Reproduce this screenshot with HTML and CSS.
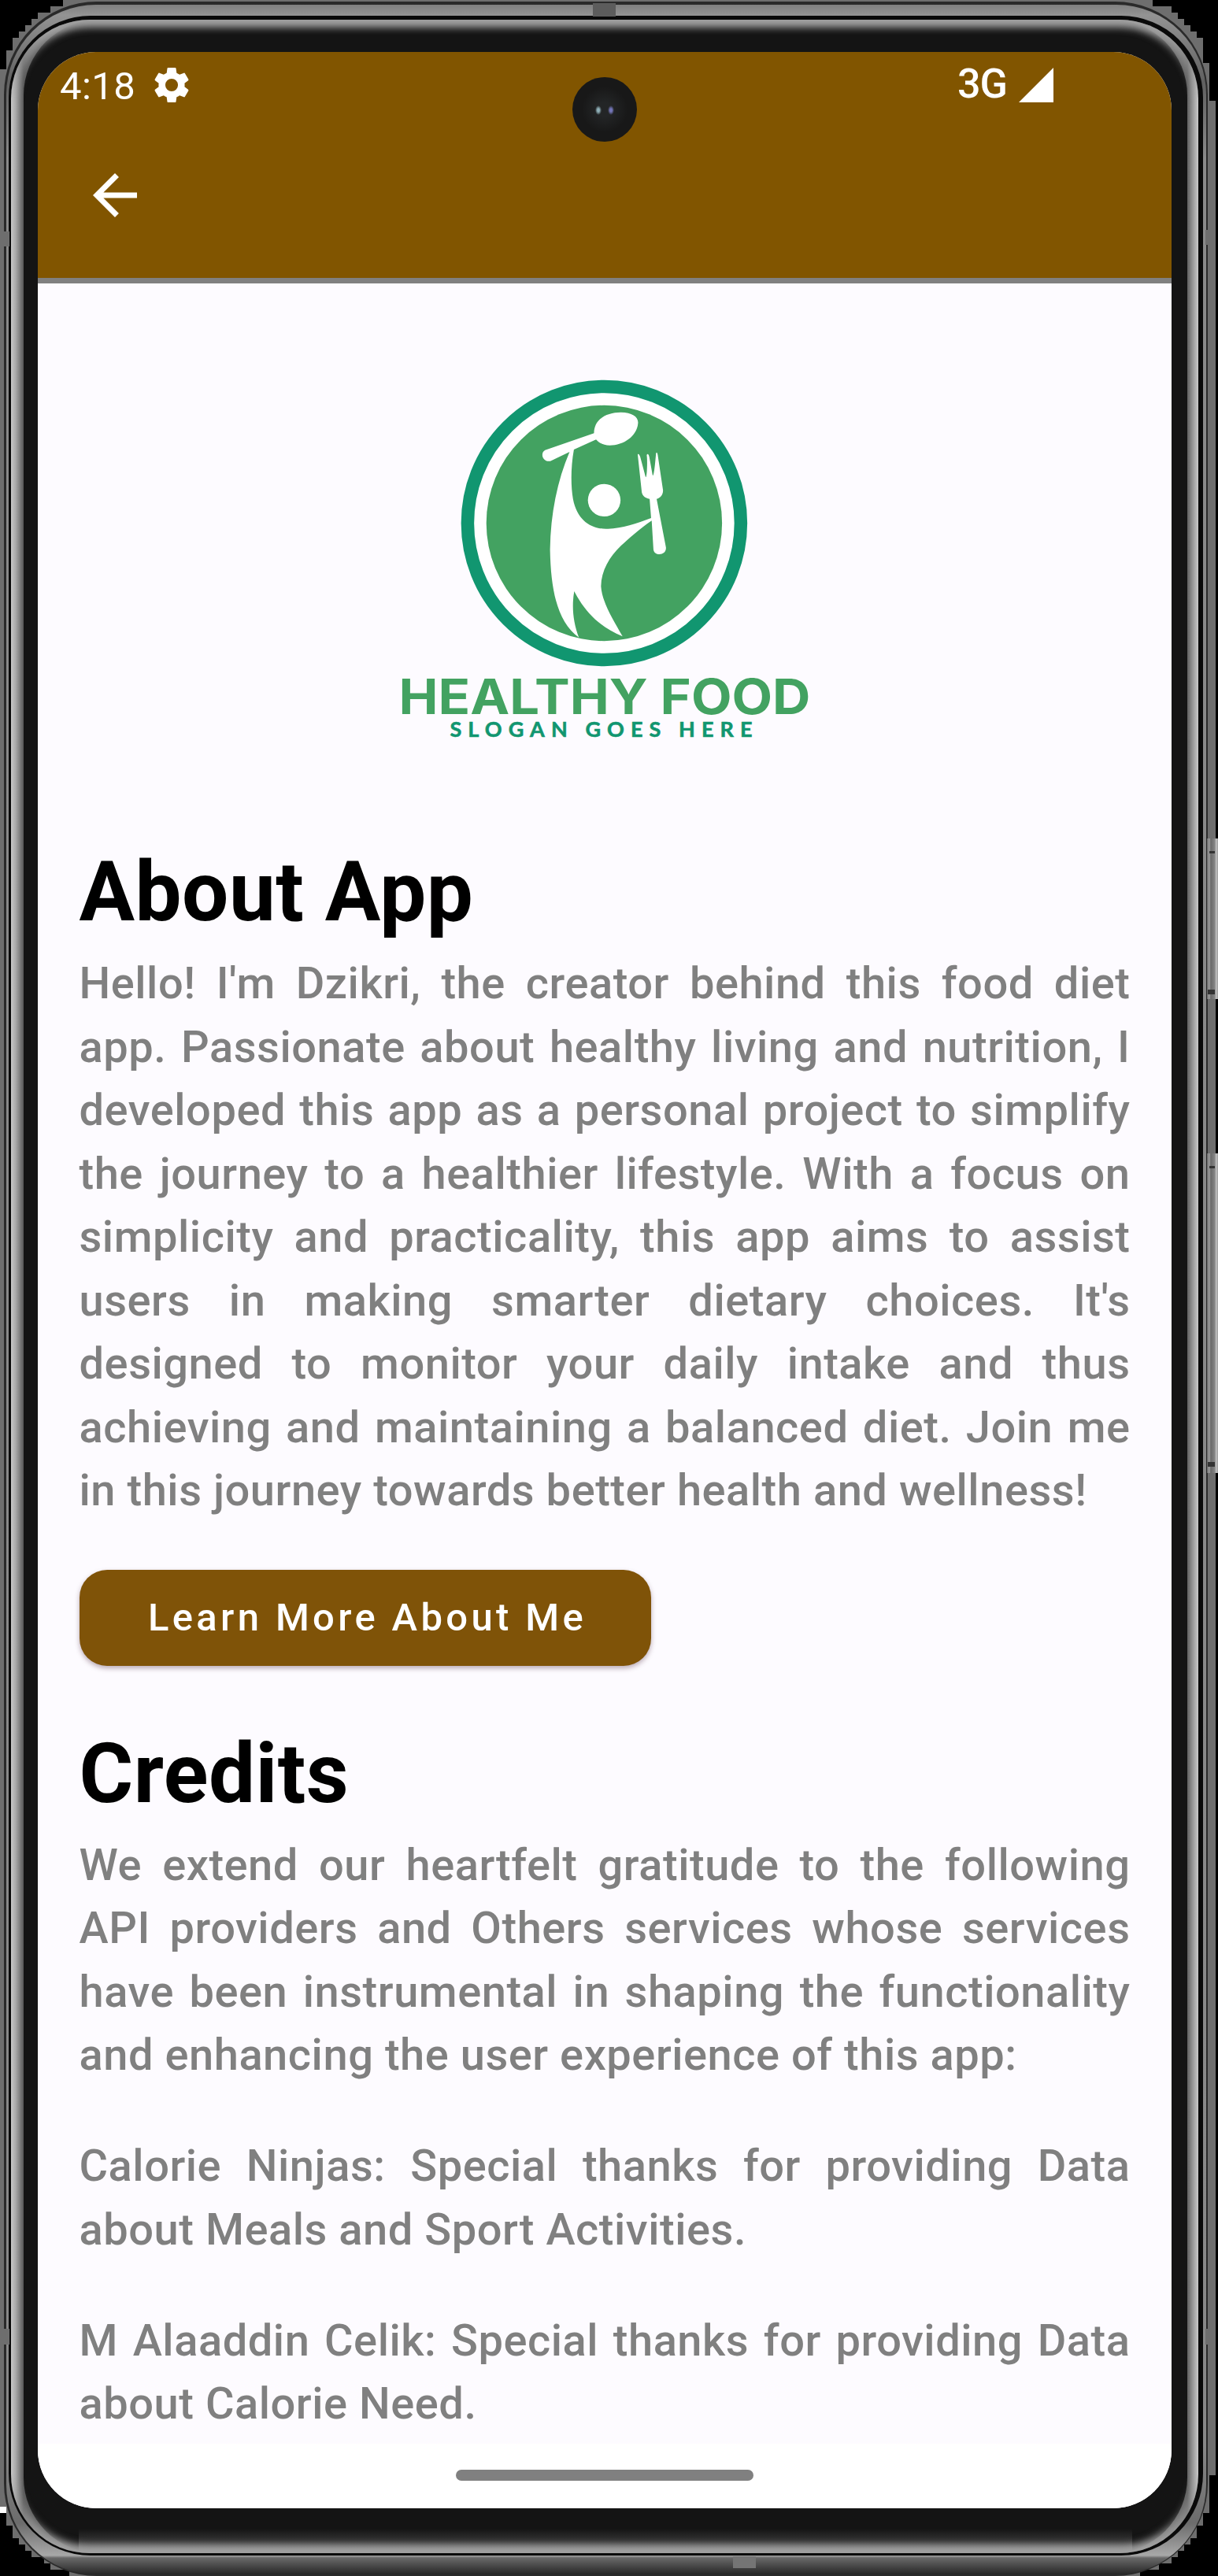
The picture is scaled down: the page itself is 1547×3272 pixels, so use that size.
FILE: index.html
```html
<!DOCTYPE html>
<html lang="en">
<head>
<meta charset="utf-8">
<title>About App</title>
<link rel="stylesheet" href="styles.css">
</head>
<body>
<div class="device">
  <svg class="shell" viewBox="0 0 1547 3272" aria-hidden="true">
    <defs>
      <linearGradient id="sides" gradientUnits="userSpaceOnUse" x1="14" y1="0" x2="1522" y2="0">
        <stop offset="0" stop-color="#c8c8c8"/><stop offset=".004" stop-color="#a8a8a8"/><stop offset=".0106" stop-color="#585858"/>
        <stop offset=".9907" stop-color="#606060"/><stop offset=".995" stop-color="#949494"/><stop offset="1" stop-color="#cacaca"/>
      </linearGradient>
      <linearGradient id="rim" gradientUnits="userSpaceOnUse" x1="0" y1="6" x2="0" y2="3270">
        <stop offset="0" stop-color="#808080"/><stop offset=".004" stop-color="#939393"/><stop offset=".03" stop-color="#606060"/><stop offset=".06" stop-color="#8a8a8a"/>
        <stop offset=".95" stop-color="#888"/><stop offset=".98" stop-color="#6c6c6c"/><stop offset=".9926" stop-color="#a8a8a8"/><stop offset=".9936" stop-color="#686868"/><stop offset="1" stop-color="#262626"/>
      </linearGradient>
      <linearGradient id="key" gradientUnits="userSpaceOnUse" x1="1533" y1="0" x2="1547" y2="0"><stop offset="0" stop-color="#666"/><stop offset=".2" stop-color="#a0a0a0"/><stop offset=".35" stop-color="#696969"/><stop offset=".7" stop-color="#858585"/><stop offset=".85" stop-color="#c4c4c4"/><stop offset="1" stop-color="#999"/></linearGradient>
      <linearGradient id="fade" gradientUnits="userSpaceOnUse" x1="0" y1="0" x2="0" y2="3272">
        <stop offset=".012" stop-color="#fff"/><stop offset=".04" stop-color="#000"/><stop offset=".96" stop-color="#000"/><stop offset=".988" stop-color="#fff"/>
      </linearGradient>
      <linearGradient id="glow-bottom" x1="0" y1="0" x2="0" y2="1"><stop offset="0" stop-color="#141414"/><stop offset=".5" stop-color="#343434"/><stop offset="1" stop-color="#707070"/></linearGradient>
      <mask id="ends" maskUnits="userSpaceOnUse" x="0" y="0" width="1547" height="3272"><rect width="1547" height="3272" fill="url(#fade)"/></mask>
      <filter id="soft" filterUnits="userSpaceOnUse" x="0" y="0" width="1547" height="3272"><feGaussianBlur stdDeviation="5"/></filter>
      <clipPath id="inner"><rect x="14" y="25" width="1508" height="3218" rx="100"/></clipPath>
      <clipPath id="glass"><rect x="30" y="25" width="1478" height="3218" rx="96"/></clipPath>
    </defs>
    <path fill="#6e6e6e" d="M80 0H1464V8H1488V16H1496V24H1504V32H1512V40H1520V48H1528V80H1536V128H1544V3144H1536V3192H1528V3208H1520V3224H1512V3232H1504V3240H1496V3248H1488V3256H1472V3264H1448V3272H88V3264H64V3256H56V3248H40V3240H32V3232H24V3224H16V3208H8V3192H0V88H8V64H16V48H24V40H32V32H40V24H48V16H64V8H80Z"/>
    <path fill="#fff" d="M0 3184h8v8H0Z"/>
    <rect x="5" y="2" width="1529" height="3270" rx="118" fill="#2a2a2a"/>
    <rect x="8" y="6" width="1524" height="3264" rx="114" fill="url(#rim)"/>
    <rect x="11" y="20" width="1517" height="3226" rx="104" fill="#0a0a0a"/>
    <g clip-path="url(#inner)">
      <rect x="14" y="25" width="1508" height="3218" fill="url(#sides)"/>
      <g clip-path="url(#glass)">
        <rect x="30" y="25" width="1478" height="3218" fill="#141414"/>
        <rect x="100" y="3212" width="1338" height="31" fill="url(#glow-bottom)"/>
      </g>
      <g mask="url(#ends)"><rect x="14" y="25" width="1508" height="3218" rx="100" fill="none" stroke="#a0a0a0" stroke-width="20" filter="url(#soft)"/></g>
    </g>
    <rect x="753" y="4" width="29" height="17" fill="#5c5c5c"/>
    <rect x="931" y="3247" width="29" height="15" fill="#757575"/>
    <g fill="#6e6e6e"><rect x="0" y="294" width="12" height="19"/><rect x="1531" y="292" width="13" height="19"/><rect x="0" y="2958" width="12" height="20"/><rect x="1531" y="2958" width="13" height="20"/></g>
    <g fill="url(#key)"><rect x="1533" y="1065" width="14" height="204"/><rect x="1533" y="1465" width="14" height="406"/></g>
    <g fill="#333"><rect x="1536" y="1081" width="7" height="3"/><rect x="1534" y="1257" width="9" height="6"/><rect x="1536" y="1481" width="7" height="3"/><rect x="1534" y="1857" width="9" height="6"/></g>
  </svg>

  <main class="screen">
    <header class="app-header">
      <div class="status-bar">
        <span class="clock">4:18</span>
        <svg class="gear" viewBox="2 2 20 20"><path fill="#fff" d="M19.140 12.940c.04-.3.060-.61.060-.94 0-.32-.02-.64-.07-.94l2.030-1.580c.18-.14.230-.41.120-.61l-1.920-3.320c-.12-.22-.37-.29-.59-.22l-2.390.96c-.5-.38-1.030-.7-1.620-.94L14.400 2.810c-.04-.24-.24-.41-.48-.41h-3.840c-.24 0-.43.170-.47.410L9.250 5.350C8.660 5.590 8.120 5.920 7.630 6.290L5.240 5.330c-.22-.08-.47 0-.59.220L2.740 8.870c-.12.210-.08.470.12.610l2.030 1.580c-.05.300-.09.630-.09.940s.02.640.07.940l-2.030 1.580c-.18.140-.23.410-.12.610l1.920 3.320c.12.220.37.290.59.220l2.390-.96c.5.380 1.030.7 1.620.94l.36 2.540c.05.240.24.410.48.410h3.840c.24 0 .44-.17.470-.41l.36-2.540c.59-.24 1.130-.56 1.620-.94l2.390.96c.22.080.47 0 .59-.22l1.920-3.320c.12-.22.070-.47-.12-.61zM12 15.500A3.500 3.500 0 1 1 12 8.500a3.500 3.500 0 0 1 0 7z"/></svg>
        <span class="network">3G</span>
        <svg class="signal" viewBox="0 0 44 44"><path fill="#fff" d="M44 0V44H0Z"/></svg>
      </div>
      <svg class="back" viewBox="4 4 16 16"><path fill="#fff" d="M20 11H7.830l5.590-5.590L12 4l-8 8 8 8 1.410-1.410L7.830 13H20z"/></svg>
      <span class="camera"></span>
    </header>

    <div class="content">
      <svg class="logo" viewBox="480 450 580 520" role="img" aria-label="Healthy Food">
        <circle cx="767.400" cy="664.500" r="173.500" fill="#fff" stroke="#119670" stroke-width="16.500"/>
        <circle cx="767.400" cy="664.500" r="149.700" fill="#43a261"/>
        <g fill="#fff" transform="translate(480 450) scale(.3699 .3333)">
          <path d="M742 301C742 245 788 221 834 221C874 221 896 240 893 264C889 312 844 347 796 347C776 347 760 339 749 325L673 363C662 430 662 500 670 552C685 636 735 668 790 665C838 664 889 644 938 624L933 551C917 549 908 538 906 526L892 382C895 377 899 386 901 392L919 467C924 478 926 400 923 384C926 376 930 382 932 392L943 460C948 474 953 400 955 377C958 369 961 380 962 392L979 518C979 536 970 547 957 551L989 736C992 768 948 771 946 743L940 634C898 665 860 705 835 729C795 772 767 824 766 884C770 946 807 1010 840 1075C764 1040 713 986 674 903C665 960 670 1023 690 1079C617 1020 594 905 591 745C593 605 616 482 658 372L592 407C565 412 556 376 574 365Z"/>
          <ellipse cx="777" cy="556" rx="56" ry="62"/>
        </g>
        <text class="logo-name" x="506.500" y="907" textLength="523" lengthAdjust="spacingAndGlyphs">HEALTHY FOOD</text>
        <text class="logo-slogan" x="571.500" y="935.500" textLength="384" lengthAdjust="spacing">SLOGAN GOES HERE</text>
      </svg>

      <h1>About App</h1>
      <p>Hello! I'm Dzikri, the creator behind this food diet app. Passionate about healthy living and nutrition, I developed this app as a personal project to simplify the journey to a healthier lifestyle. With a focus on simplicity and practicality, this app aims to assist users in making smarter dietary choices. It's designed to monitor your daily intake and thus achieving and maintaining a balanced diet. Join me in this journey towards better health and wellness!</p>
      <button class="more" type="button">Learn More About Me</button>
      <h1>Credits</h1>
      <p>We extend our heartfelt gratitude to the following API providers and Others services whose services have been instrumental in shaping the functionality and enhancing the user experience of this app:</p>
      <p class="credit">Calorie Ninjas: Special thanks for providing Data about Meals and Sport Activities.</p>
      <p class="credit">M Alaaddin Celik: Special thanks for providing Data about Calorie Need.</p>
    </div>
    <footer class="nav-bar"><span class="handle"></span></footer>
  </main>
</div>
</body>
</html>
```
FILE: styles.css
```css
* { box-sizing: border-box; }
body { margin: 0; background: #000; font-family: Roboto, sans-serif; }
.device { position: relative; width: 1547px; height: 3272px; padding: 66px 59px 86px 48px; overflow: hidden; }
.shell { position: absolute; inset: 0; width: 1547px; height: 3272px; }
.screen { position: relative; display: flex; flex-direction: column; width: 1440px; height: 3120px; border-radius: 74px; overflow: hidden; background: #fdfbff; }
.app-header { position: relative; flex: none; height: 294px; background: #815500; border-bottom: 7px solid #808080; }
.status-bar { display: flex; align-items: center; height: 84px; padding: 0 150px 0 28px; color: #fff; }
.clock { font-size: 49px; line-height: 84px; padding-top: 4px; letter-spacing: .4px; }
.gear { width: 46px; height: 46px; margin-left: 23px; }
.network { margin-left: auto; padding-bottom: 2px; font: 500 52px/84px Roboto, sans-serif; letter-spacing: -1px; }
.signal { width: 44px; height: 44px; margin-left: 15px; }
.back { display: block; width: 56px; height: 56px; margin: 70px 0 0 70px; }
.camera { position: absolute; left: 679px; top: 32px; width: 82px; height: 82px; border-radius: 50%; background: radial-gradient(ellipse 4px 6px at 33px 42px, #8fb0b8 35%, transparent), radial-gradient(ellipse 4px 6px at 49px 42px, #7476b8 35%, transparent), radial-gradient(circle, #232526 15%, #181818 50%); }
.content { flex: 1; min-height: 0; padding: 90px 52.500px 0; }
.logo { display: block; width: 580px; height: 520px; margin: 0 0 0 379.500px; }
.logo-name { font: 700 61.500px Inter, sans-serif; fill: #43a261; }
.logo-slogan { font: 700 27px Lato, sans-serif; fill: #119670; stroke: #119670; stroke-width: .6px; }
h1 { margin: 0; font-size: 105px; line-height: 123px; font-weight: 700; letter-spacing: .5px; color: #000; }
.logo + h1 { margin-top: 102px; }
p { margin: 14px 0 0; font-size: 56px; line-height: 80.500px; font-weight: 500; letter-spacing: .540px; text-align: justify; color: #808080; }
.more { display: block; width: 726px; height: 122px; margin: 60px 0 76px; padding: 0 0 0 6px; border: 0; border-radius: 35px; background: #7f5308; box-shadow: 0 3px 6px rgba(60, 20, 40, .35); color: #fff; font: 500 49px Roboto, sans-serif; letter-spacing: 4.350px; }
.credit { margin-top: 60.500px; }
.nav-bar { display: flex; flex: none; align-items: center; justify-content: center; height: 82px; padding-bottom: 2px; background: #fff; }
.handle { width: 378px; height: 14px; border-radius: 7px; background: #808080; }
```
